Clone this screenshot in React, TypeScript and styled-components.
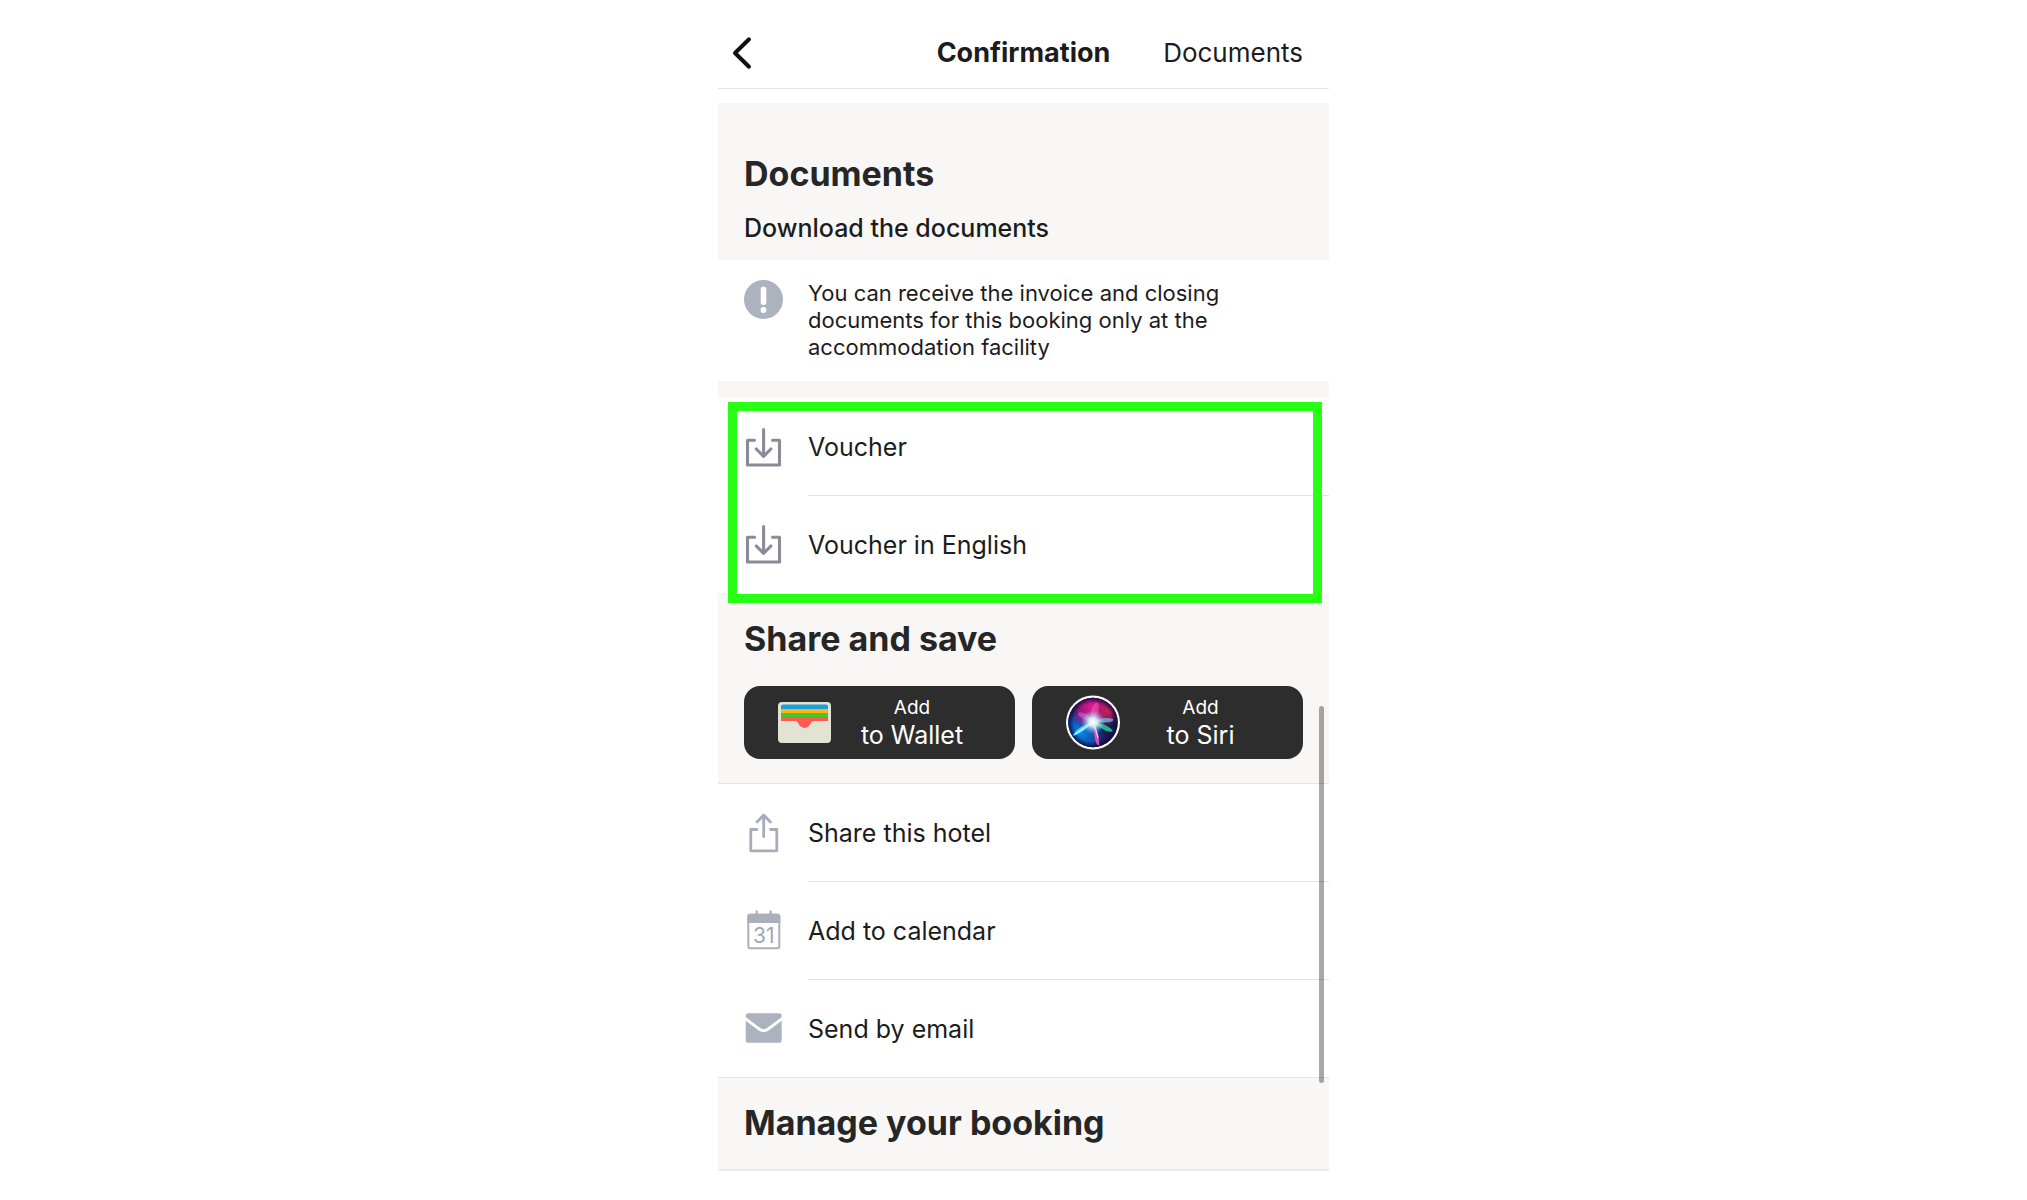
import React from "react";
import styled, { createGlobalStyle } from "styled-components";

const GlobalStyle = createGlobalStyle`
  * { box-sizing: border-box; }
  body {
    margin: 0;
    background: #ffffff;
    color: #1c1c1c;
    font-family: Inter, "Liberation Sans", sans-serif;
  }
  h1, h2, p, ul { margin: 0; padding: 0; }
  ul { list-style: none; }
`;

const Page = styled.div`
  display: flex;
  justify-content: center;
  padding-left: 20px;
`;

const Screen = styled.main`
  position: relative;
  width: 100%;
  max-width: 611px;
`;

const Header = styled.header`
  display: grid;
  grid-template-columns: 1fr auto 1fr;
  align-items: center;
  height: 89px;
  padding-top: 18px;
  margin-bottom: 14px;
  border-bottom: 1px solid #e6e6e6;
`;

const BackButton = styled.button`
  justify-self: start;
  display: flex;
  padding: 0 0 0 13px;
  border: 0;
  background: none;
  color: #111111;
  cursor: pointer;
`;

const HeaderTitle = styled.h1`
  font-size: 27px;
  line-height: 32px;
  font-weight: 700;
`;

const HeaderLink = styled.a`
  justify-self: end;
  padding-right: 26px;
  color: inherit;
  font-size: 26px;
  line-height: 32px;
  text-decoration: none;
`;

const Band = styled.section<{ $top: number; $bottom: number; $ruled?: boolean }>`
  padding: ${(p) => p.$top}px 26px ${(p) => p.$bottom}px;
  border-bottom: ${(p) => (p.$ruled ? "2px solid #ececeb" : "0")};
  background: #f8f7f6;
`;

const Heading = styled.h2`
  color: #262626;
  font-size: 34px;
  line-height: 40px;
  font-weight: 700;
`;

const Subheading = styled.p`
  margin-top: 18px;
  font-size: 25px;
  line-height: 32px;
  font-weight: 500;
`;

const Notice = styled.section`
  display: flex;
  gap: 24px;
  padding: 20px 26px;
`;

const NoticeText = styled.p`
  flex: 1;
  max-width: 430px;
  font-size: 22px;
  line-height: 27px;
`;

const Strip = styled.div`
  height: 17px;
  background: #f8f7f6;
`;

const Highlighted = styled.section`
  position: relative;
`;

const HighlightFrame = styled.div`
  position: absolute;
  inset: 4px 7px -10px 10px;
  border: 9px solid #27ff14;
  pointer-events: none;
`;

const ActionList = styled.ul<{ $ruled?: boolean }>`
  border: 0 solid #e4e4e5;
  border-width: ${(p) => (p.$ruled ? "1px 0" : "0")};
`;

const ActionItem = styled.li`
  & + & > button > span {
    border-top: 1px solid #e4e4e5;
  }
  & + & > button {
    height: 98px;
  }
`;

const ActionButton = styled.button`
  display: flex;
  align-items: center;
  gap: 24px;
  width: 100%;
  height: 97px;
  padding: 0 0 0 26px;
  border: 0;
  background: none;
  color: inherit;
  font: inherit;
  text-align: left;
  cursor: pointer;
`;

const ActionLabel = styled.span`
  flex: 1;
  display: flex;
  align-items: center;
  align-self: stretch;
  font-size: 25px;
  line-height: 32px;
`;

const Icon = styled.svg`
  flex: none;
  display: block;
`;

const ShortcutRow = styled.div`
  display: grid;
  grid-template-columns: 1fr 1fr;
  gap: 17px;
  margin-top: 27px;
`;

const ShortcutButton = styled.button`
  display: flex;
  align-items: center;
  height: 73px;
  padding: 0 22px 0 34px;
  border: 0;
  border-radius: 16px;
  background: #2d2d2d;
  color: #ffffff;
  font: inherit;
  cursor: pointer;
`;

const ShortcutText = styled.span`
  flex: 1;
  display: flex;
  flex-direction: column;
  align-items: center;
  font-size: 25px;
  line-height: 30px;
  white-space: nowrap;
`;

const ShortcutPrefix = styled.small`
  font-size: 19px;
  line-height: 24px;
`;

const ScrollThumb = styled.div`
  position: absolute;
  top: 706px;
  right: 5px;
  width: 5px;
  height: 377px;
  border-radius: 3px;
  background: rgba(0, 0, 0, 0.34);
`;

const BackIcon = () => (
  <Icon width="24" height="34" viewBox="0 0 24 34" fill="none" stroke="currentColor" strokeWidth="4" strokeLinecap="round" strokeLinejoin="round" aria-hidden="true">
    <path d="M18 3.300 4 17l14 13.700" />
  </Icon>
);

const AlertIcon = () => (
  <Icon width="40" height="40" viewBox="0 0 40 40" aria-hidden="true">
    <circle cx="19.500" cy="19.500" r="19.500" fill="#adb2bf" />
    <path d="M19.500 9.200v13" stroke="#fff" strokeWidth="5.600" strokeLinecap="round" />
    <circle cx="19.500" cy="30" r="2.900" fill="#fff" />
  </Icon>
);

const DownloadIcon = () => (
  <Icon width="40" height="40" viewBox="0 0 40 40" fill="none" stroke="#8b8a97" strokeWidth="3.100" strokeLinecap="round" strokeLinejoin="round" aria-hidden="true">
    <path d="M10.500 13.300H3.500V38H35.500V13.300H28.500" />
    <path d="M19.600 2.500V29.200M12.300 22l7.300 7.300 7.300-7.300" />
  </Icon>
);

const ShareIcon = () => (
  <Icon width="40" height="40" viewBox="0 0 40 40" fill="none" stroke="#a6acba" strokeWidth="2.800" strokeLinecap="round" strokeLinejoin="round" aria-hidden="true">
    <path d="M12.800 16.500H6.800V37.800H32.800V16.500H26.600" />
    <path d="M19.700 23.500V2.300M13 9l6.700-6.900L26.400 9" />
  </Icon>
);

const CalendarIcon = () => (
  <Icon width="40" height="40" viewBox="0 0 40 40" aria-hidden="true">
    <rect x="4.300" y="4.800" width="31" height="33.500" rx="2" fill="none" stroke="#a9afbc" strokeWidth="2" />
    <path d="M3.300 13V6a2.200 2.200 0 0 1 2.200-2.200H34.100a2.200 2.200 0 0 1 2.200 2.200v7z" fill="#a9afbc" />
    <path d="M12.700 5V1.400M26.700 5V1.400" stroke="#a9afbc" strokeWidth="2.200" strokeLinecap="round" />
    <text x="19.700" y="33" textAnchor="middle" fontFamily='Inter, "Liberation Sans", sans-serif' fontSize="21" fill="#a0a6b5">31</text>
  </Icon>
);

const MailIcon = () => (
  <Icon width="40" height="40" viewBox="0 0 40 40" fill="none" aria-hidden="true">
    <rect x="1.700" y="5.300" width="36" height="29.400" rx="2.800" fill="#adb2bf" />
    <path d="M0 9.600 15.500 21.200Q19.700 24 23.900 21.200L39.400 9.600" stroke="#fff" strokeWidth="2.900" />
  </Icon>
);

const WalletIcon = () => (
  <Icon width="53" height="41" viewBox="0 0 53 41" aria-hidden="true">
    <rect width="53" height="41" rx="4" fill="#e3e3d4" />
    <path d="M3 7.500V4.500a2 2 0 0 1 2-2h43a2 2 0 0 1 2 2v3z" fill="#1f9fd8" />
    <rect x="3" y="7" width="47" height="4.500" fill="#fdb415" />
    <rect x="3" y="11" width="47" height="5" fill="#3fcb27" />
    <path d="M3 15.300H50V19H36c-2 0-2.600 1.300-3.600 3-1.300 2.200-3 3.900-5.900 3.900s-4.600-1.700-5.900-3.900c-1-1.700-1.600-3-3.600-3H3z" fill="#ff5b50" />
  </Icon>
);

const SiriIcon = () => (
  <Icon width="54" height="55" viewBox="0 0 54 55" aria-hidden="true">
    <defs>
      <radialGradient id="siriPink" cx="0.5" cy="0.2" r="0.5">
        <stop offset="0" stopColor="#e81a94" />
        <stop offset="0.6" stopColor="#b3167c" stopOpacity="0.8" />
        <stop offset="1" stopColor="#6a1580" stopOpacity="0" />
      </radialGradient>
      <radialGradient id="siriRed" cx="0.82" cy="0.26" r="0.32">
        <stop offset="0" stopColor="#d01f4c" />
        <stop offset="1" stopColor="#a51c5c" stopOpacity="0" />
      </radialGradient>
      <radialGradient id="siriBlue" cx="0.25" cy="0.7" r="0.55">
        <stop offset="0" stopColor="#0a86e8" />
        <stop offset="0.6" stopColor="#0a58bb" stopOpacity="0.85" />
        <stop offset="1" stopColor="#141a66" stopOpacity="0" />
      </radialGradient>
      <radialGradient id="siriGlow">
        <stop offset="0" stopColor="#ffffff" />
        <stop offset="0.35" stopColor="#e4faff" stopOpacity="0.9" />
        <stop offset="1" stopColor="#72d6ff" stopOpacity="0" />
      </radialGradient>
      <radialGradient id="siriEdge">
        <stop offset="0.78" stopColor="#120b40" stopOpacity="0" />
        <stop offset="1" stopColor="#120b40" stopOpacity="0.9" />
      </radialGradient>
    </defs>
    <circle cx="27" cy="27.500" r="27" fill="#ffffff" />
    <circle cx="27" cy="27.500" r="24.700" fill="#1a1550" />
    <circle cx="27" cy="27.500" r="24.700" fill="url(#siriBlue)" />
    <circle cx="27" cy="27.500" r="24.700" fill="url(#siriPink)" />
    <circle cx="27" cy="27.500" r="24.700" fill="url(#siriRed)" />
    <circle cx="27" cy="27.500" r="24.700" fill="url(#siriEdge)" />
    <path d="M27 27C20 25 12 23 12 18c7-2 13 4 15 9z" fill="#d56bd4" opacity="0.55" />
    <path d="M27 27C23 20 25 10 31 7c4 5 1 14-4 20z" fill="#f05fb4" opacity="0.5" />
    <path d="M27 27c6-4 14-5 20-3 1 3-3 4-20 3z" fill="#5fc7d8" opacity="0.75" />
    <path d="M27 27c8 1 17 4 20 9-4 3-13-3-20-9z" fill="#18c98b" opacity="0.9" />
    <path d="M27 27c4 6 7 17 6 23-4 1-5-12-6-23z" fill="#f04cae" opacity="0.95" />
    <path d="M27 27C22 33 14 39 7 41c0-4 10-12 20-14z" fill="#43d6ff" opacity="0.95" />
    <path d="M27 27C21 31 13 36 9 39.500 15 35 22 31 27 27zM27 27c2 5 4 11 5 16" stroke="#e8fbff" strokeWidth="1.200" fill="none" opacity="0.8" />
    <circle cx="27" cy="27" r="12" fill="url(#siriGlow)" />
  </Icon>
);

const Action = ({ icon, label }: { icon: React.ReactNode; label: string }) => (
  <ActionItem>
    <ActionButton type="button">
      {icon}
      <ActionLabel>{label}</ActionLabel>
    </ActionButton>
  </ActionItem>
);

const Shortcut = ({ icon, label }: { icon: React.ReactNode; label: string }) => (
  <ShortcutButton type="button">
    {icon}
    <ShortcutText>
      <ShortcutPrefix>Add</ShortcutPrefix>
      {label}
    </ShortcutText>
  </ShortcutButton>
);

export default function App() {
  return (
    <>
      <GlobalStyle />
      <Page>
        <Screen>
          <Header>
            <BackButton type="button" aria-label="Back">
              <BackIcon />
            </BackButton>
            <HeaderTitle>Confirmation</HeaderTitle>
            <HeaderLink href="#documents">Documents</HeaderLink>
          </Header>

          <Band id="documents" $top={51} $bottom={16}>
            <Heading>Documents</Heading>
            <Subheading>Download the documents</Subheading>
          </Band>
          <Notice>
            <AlertIcon />
            <NoticeText>
              You can receive the invoice and closing documents for this booking only at the accommodation facility
            </NoticeText>
          </Notice>
          <Strip />
          <Highlighted>
            <ActionList>
              <Action icon={<DownloadIcon />} label="Voucher" />
              <Action icon={<DownloadIcon />} label="Voucher in English" />
            </ActionList>
            <HighlightFrame />
          </Highlighted>

          <Band $top={26} $bottom={24}>
            <Heading>Share and save</Heading>
            <ShortcutRow>
              <Shortcut icon={<WalletIcon />} label="to Wallet" />
              <Shortcut icon={<SiriIcon />} label="to Siri" />
            </ShortcutRow>
          </Band>
          <ActionList $ruled>
            <Action icon={<ShareIcon />} label="Share this hotel" />
            <Action icon={<CalendarIcon />} label="Add to calendar" />
            <Action icon={<MailIcon />} label="Send by email" />
          </ActionList>

          <Band $top={25} $bottom={26} $ruled>
            <Heading>Manage your booking</Heading>
          </Band>
          <ScrollThumb />
        </Screen>
      </Page>
    </>
  );
}
